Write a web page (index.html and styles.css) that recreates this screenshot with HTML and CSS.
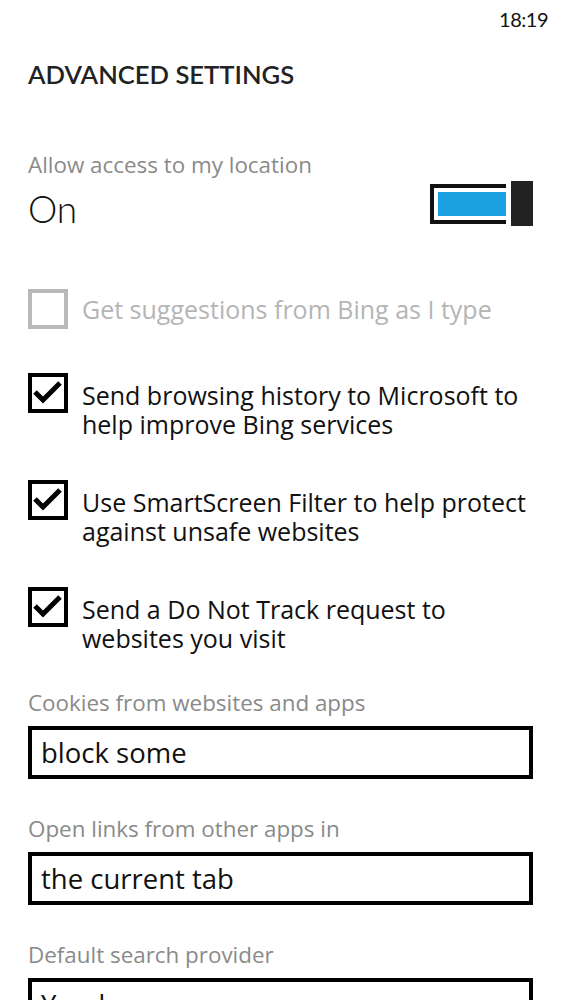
FILE: index.html
```html
<!DOCTYPE html>
<html lang="en">
<head>
<meta charset="utf-8">
<title>Advanced settings</title>
<link rel="stylesheet" href="styles.css">
</head>
<body>
<div class="status"><span class="clock">18:19</span></div>
<main class="page">
  <h1 class="title">ADVANCED SETTINGS</h1>

  <section class="location">
    <div class="label">Allow access to my location</div>
    <div class="toggle-row">
      <span class="toggle-value">On</span>
      <span class="switch">
        <span class="track"><span class="fill"></span></span>
        <span class="thumb"></span>
      </span>
    </div>
  </section>

  <div class="check disabled">
    <svg class="box" width="40" height="40" viewBox="0 0 40 40"><rect x="2" y="2" width="36" height="36" fill="none" stroke="#b9b9b9" stroke-width="4"/></svg>
    <span class="check-text">Get suggestions from Bing as I type</span>
  </div>

  <div class="check first">
    <svg class="box" width="40" height="40" viewBox="0 0 40 40"><rect x="2" y="2" width="36" height="36" fill="none" stroke="#000" stroke-width="4"/><polyline points="7,19 15,27 32,10" fill="none" stroke="#000" stroke-width="5"/></svg>
    <span class="check-text">Send browsing history to Microsoft to help improve Bing services</span>
  </div>

  <div class="check">
    <svg class="box" width="40" height="40" viewBox="0 0 40 40"><rect x="2" y="2" width="36" height="36" fill="none" stroke="#000" stroke-width="4"/><polyline points="7,19 15,27 32,10" fill="none" stroke="#000" stroke-width="5"/></svg>
    <span class="check-text">Use SmartScreen Filter to help protect against unsafe websites</span>
  </div>

  <div class="check">
    <svg class="box" width="40" height="40" viewBox="0 0 40 40"><rect x="2" y="2" width="36" height="36" fill="none" stroke="#000" stroke-width="4"/><polyline points="7,19 15,27 32,10" fill="none" stroke="#000" stroke-width="5"/></svg>
    <span class="check-text">Send a Do Not Track request to websites you visit</span>
  </div>

  <section class="picker">
    <div class="label">Cookies from websites and apps</div>
    <div class="select">block some</div>
  </section>

  <section class="picker">
    <div class="label">Open links from other apps in</div>
    <div class="select">the current tab</div>
  </section>

  <section class="picker">
    <div class="label">Default search provider</div>
    <div class="select">Yandex</div>
  </section>
</main>
</body>
</html>
```

FILE: styles.css
```css
html, body {
  margin: 0;
  padding: 0;
  background: #fff;
  overflow: hidden;
}

body {
  font-family: "Open Sans", Lato, sans-serif;
  color: #111;
  height: 1000px;
}

.status {
  height: 38px;
  display: flex;
  justify-content: flex-end;
  align-items: center;
  padding-right: 14px;
}

.clock {
  font-family: Lato, "Open Sans", sans-serif;
  font-size: 20px;
  letter-spacing: -0.5px;
  color: #111;
}

.page {
  padding: 0 29px 0 28px;
}

.title {
  margin: 18px 0 0;
  font-family: Lato, "Open Sans", sans-serif;
  font-size: 25.6px;
  line-height: 36px;
  font-weight: 600;
  color: #222;
}

.label {
  font-size: 22.4px;
  line-height: 30px;
  color: #8a8a8a;
}

.location {
  margin-top: 58px;
}

.toggle-row {
  display: flex;
  align-items: flex-start;
  justify-content: space-between;
}

.toggle-value {
  font-family: Lato, "Open Sans", sans-serif;
  font-size: 37px;
  font-weight: 300;
  line-height: 48px;
  padding-top: 5px;
  color: #111;
}

.switch {
  display: flex;
  align-items: center;
  gap: 5px;
  margin-top: 1px;
}

.track {
  display: block;
  width: 68px;
  height: 24px;
  border: 4px solid #111;
  border-right: 0;
  padding: 4px 0 4px 4px;
}

.fill {
  display: block;
  height: 100%;
  background: #1ba1e2;
}

.thumb {
  display: block;
  width: 22px;
  height: 45px;
  background: #222;
}

.check {
  display: flex;
  align-items: flex-start;
  gap: 14px;
  margin-top: 41px;
  margin-right: -14px;
}

.check.disabled {
  margin-top: 56px;
}

.check.first {
  margin-top: 44px;
}

.box {
  flex: none;
  display: block;
}

.check-text {
  font-size: 25px;
  line-height: 29px;
  padding-top: 8px;
  color: #111;
}

.check.disabled .check-text {
  color: #b5b5b5;
  line-height: 40px;
  padding-top: 0;
}

.picker {
  margin-top: 35px;
}

.select {
  margin-top: 8px;
  height: 45px;
  border: 4px solid #000;
  padding-left: 9px;
  font-size: 27.5px;
  line-height: 45px;
  color: #111;
  white-space: nowrap;
}
```
